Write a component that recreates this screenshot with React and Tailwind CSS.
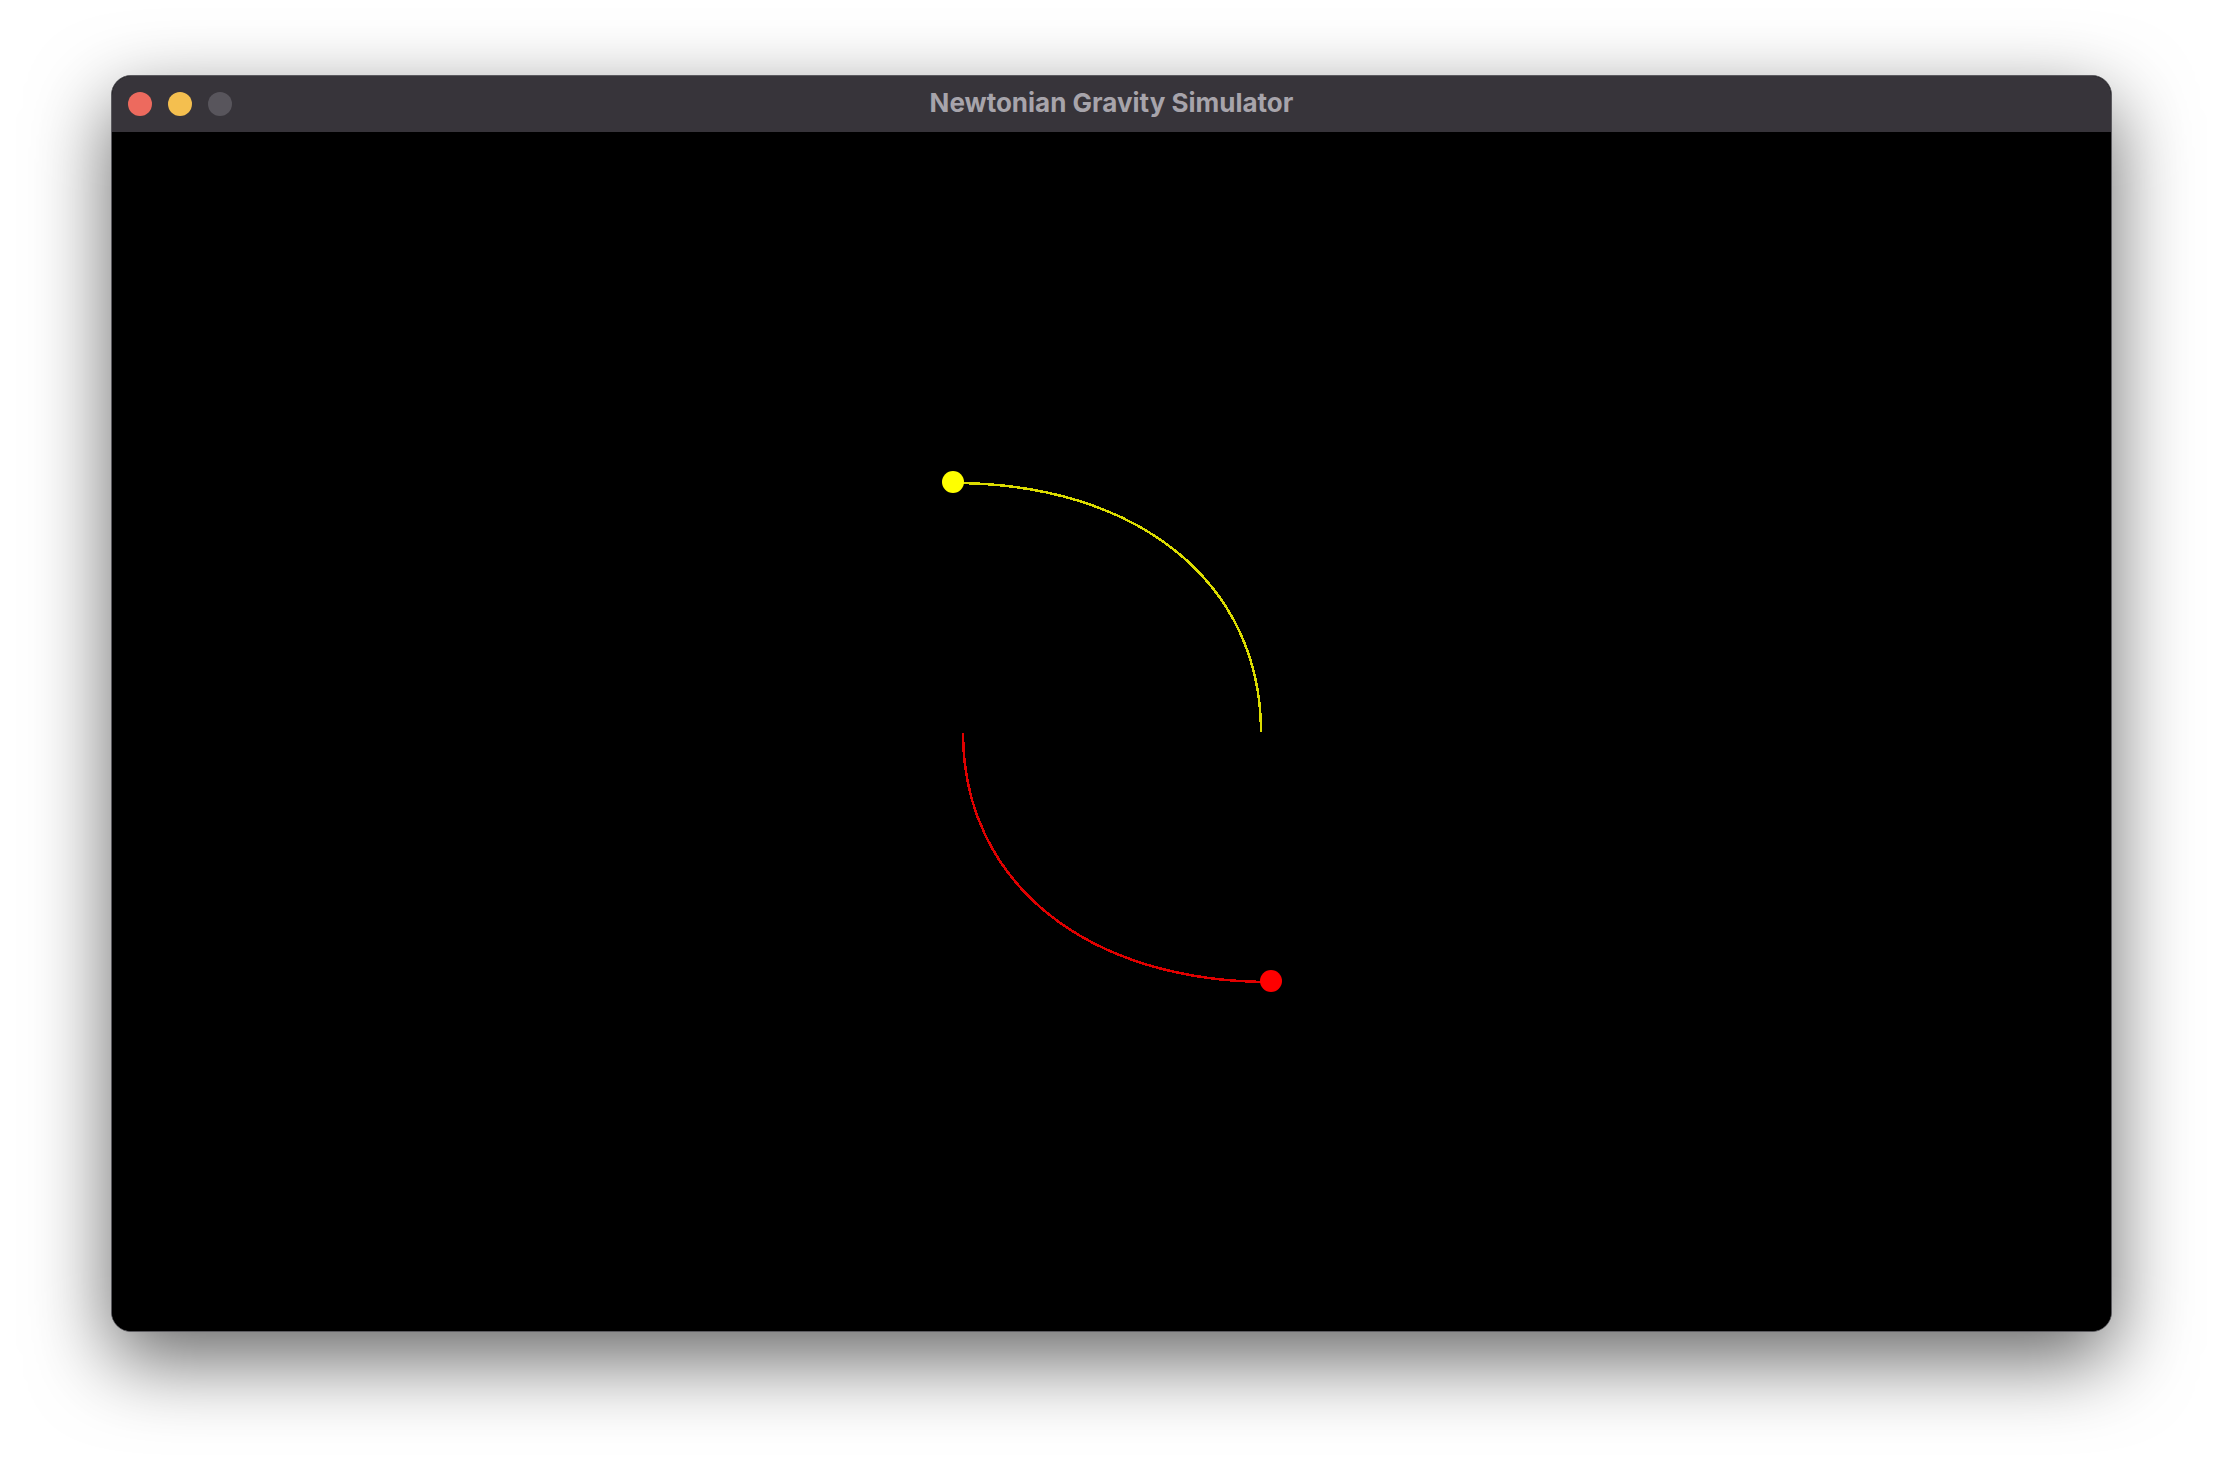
import React from "react";

// trail of each body, in page coordinates (the canvas viewBox starts at 112,132)
const YELLOW_TRAIL = "M 1261 732 C 1261 583 1138 483 953 483";
const RED_TRAIL = "M 963 733 C 963 882 1086 982 1271 982";

export default function App() {
  return (
    <div className="w-[2224px] h-[1480px] bg-white pl-[111px] pt-[75px]">
      {/* Window */}
      <div className="w-[2001px] h-[1257px] flex flex-col rounded-[20px] border border-[#5b5a5f] bg-black overflow-hidden shadow-[0_28px_80px_rgba(0,0,0,0.6)]">
        {/* Title bar */}
        <div className="h-[56px] flex-shrink-0 grid grid-cols-[1fr_auto_1fr] items-center bg-[#37343a]">
          <div className="flex items-center gap-[16px] pl-[16px]">
            <div className="w-[24px] h-[24px] rounded-full bg-[#ed6a5e]" />
            <div className="w-[24px] h-[24px] rounded-full bg-[#f4bf4f]" />
            <div className="w-[24px] h-[24px] rounded-full bg-[#58555c]" />
          </div>
          <h1 className="text-[26px] font-bold text-[#a7a4ab] font-['Inter',sans-serif] leading-none -mt-[2px]">
            Newtonian Gravity Simulator
          </h1>
          <div />
        </div>

        {/* Canvas */}
        <div className="flex-1 bg-black">
          <svg
            width="1999"
            height="1199"
            viewBox="112 132 1999 1199"
            className="block"
          >
            <path
              d={YELLOW_TRAIL}
              fill="none"
              stroke="#dcdc00"
              strokeWidth="2.5"
              shapeRendering="crispEdges"
            />
            <path
              d={RED_TRAIL}
              fill="none"
              stroke="#e00000"
              strokeWidth="2.5"
              shapeRendering="crispEdges"
            />
            <circle cx="953" cy="482" r="11" fill="#ffff00" />
            <circle cx="1271" cy="981" r="11" fill="#ff0000" />
          </svg>
        </div>
      </div>
    </div>
  );
}
